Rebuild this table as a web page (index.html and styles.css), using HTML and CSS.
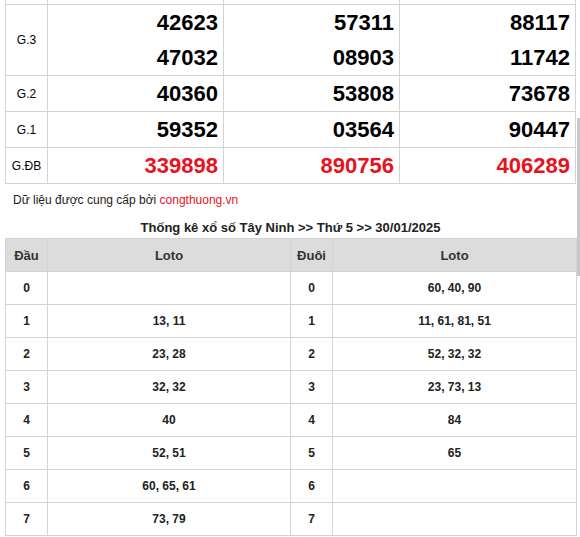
FILE: index.html
```html
<!DOCTYPE html>
<html lang="vi">
<head>
<meta charset="utf-8">
<link rel="stylesheet" href="styles.css">
</head>
<body>
<div class="page">
  <table class="kq">
    <colgroup><col class="c-label"><col class="c-num"><col class="c-num"><col class="c-num3"></colgroup>
    <tr class="cut"><td></td><td></td><td></td><td></td></tr>
    <tr>
      <td class="lbl">G.3</td>
      <td class="num"><div>42623</div><div>47032</div></td>
      <td class="num"><div>57311</div><div>08903</div></td>
      <td class="num"><div>88117</div><div>11742</div></td>
    </tr>
    <tr>
      <td class="lbl">G.2</td>
      <td class="num"><div>40360</div></td>
      <td class="num"><div>53808</div></td>
      <td class="num"><div>73678</div></td>
    </tr>
    <tr>
      <td class="lbl">G.1</td>
      <td class="num"><div>59352</div></td>
      <td class="num"><div>03564</div></td>
      <td class="num"><div>90447</div></td>
    </tr>
    <tr>
      <td class="lbl">G.ĐB</td>
      <td class="num red"><div>339898</div></td>
      <td class="num red"><div>890756</div></td>
      <td class="num red"><div>406289</div></td>
    </tr>
  </table>

  <p class="credit">Dữ liệu được cung cấp bởi <a class="src">congthuong.vn</a></p>

  <h3 class="title">Thống kê xổ số Tây Ninh &gt;&gt; Thứ 5 &gt;&gt; 30/01/2025</h3>

  <table class="stat">
    <colgroup><col class="s-key"><col class="s-val"><col class="s-key"><col class="s-val2"></colgroup>
    <tr class="head"><th>Đầu</th><th>Loto</th><th>Đuôi</th><th>Loto</th></tr>
    <tr><td>0</td><td></td><td>0</td><td>60, 40, 90</td></tr>
    <tr><td>1</td><td>13, 11</td><td>1</td><td>11, 61, 81, 51</td></tr>
    <tr><td>2</td><td>23, 28</td><td>2</td><td>52, 32, 32</td></tr>
    <tr><td>3</td><td>32, 32</td><td>3</td><td>23, 73, 13</td></tr>
    <tr><td>4</td><td>40</td><td>4</td><td>84</td></tr>
    <tr><td>5</td><td>52, 51</td><td>5</td><td>65</td></tr>
    <tr><td>6</td><td>60, 65, 61</td><td>6</td><td></td></tr>
    <tr><td>7</td><td>73, 79</td><td>7</td><td></td></tr>
  </table>
  <div class="scroll-thumb"></div>
</div>
</body>
</html>
```

FILE: styles.css
```css
html, body {
  margin: 0;
  padding: 0;
  background: #fff;
}
body {
  font-family: "Liberation Sans", Arial, sans-serif;
  color: #222;
}
.page {
  position: relative;
  padding-left: 5px;
  width: 571px;
}
table {
  border-collapse: collapse;
  table-layout: fixed;
  width: 571px;
}
td, th {
  border: 1px solid #d3d3d3;
  padding: 0;
}
.c-label { width: 42px; }
.c-num { width: 176px; }
.c-num3 { width: 176px; }

.kq .cut td {
  height: 4px;
  border-top: none;
}
.kq .lbl {
  font-size: 12px;
  text-align: center;
  color: #000;
  vertical-align: middle;
}
.kq .num {
  text-align: right;
  padding-right: 5px;
  font-size: 22px;
  font-weight: bold;
  color: #000;
}
.kq .num div {
  line-height: 35px;
  height: 35px;
}
.kq .num.red { color: #e8121f; }

.credit {
  margin: 8px 0 0 8px;
  font-size: 12px;
  line-height: 16px;
  color: #222;
}
.src {
  color: #e8121f;
  text-decoration: none;
}
.title {
  margin: 11px 0 0;
  font-size: 13px;
  line-height: 18px;
  text-align: center;
  font-weight: bold;
  color: #222;
}
.stat {
  margin-top: 1px;
}
.s-key { width: 42px; }
.s-val { width: 243px; }
.s-val2 { width: 244px; }
.stat th, .stat td {
  height: 32px;
  text-align: center;
  vertical-align: middle;
  font-size: 12px;
  font-weight: bold;
  color: #222;
}
.stat .head th {
  background: #dcdcdc;
  font-size: 13px;
  color: #333;
}
.scroll-thumb {
  position: absolute;
  left: 577px;
  top: 118px;
  width: 3px;
  height: 158px;
  background: #c8c8c8;
}
```
